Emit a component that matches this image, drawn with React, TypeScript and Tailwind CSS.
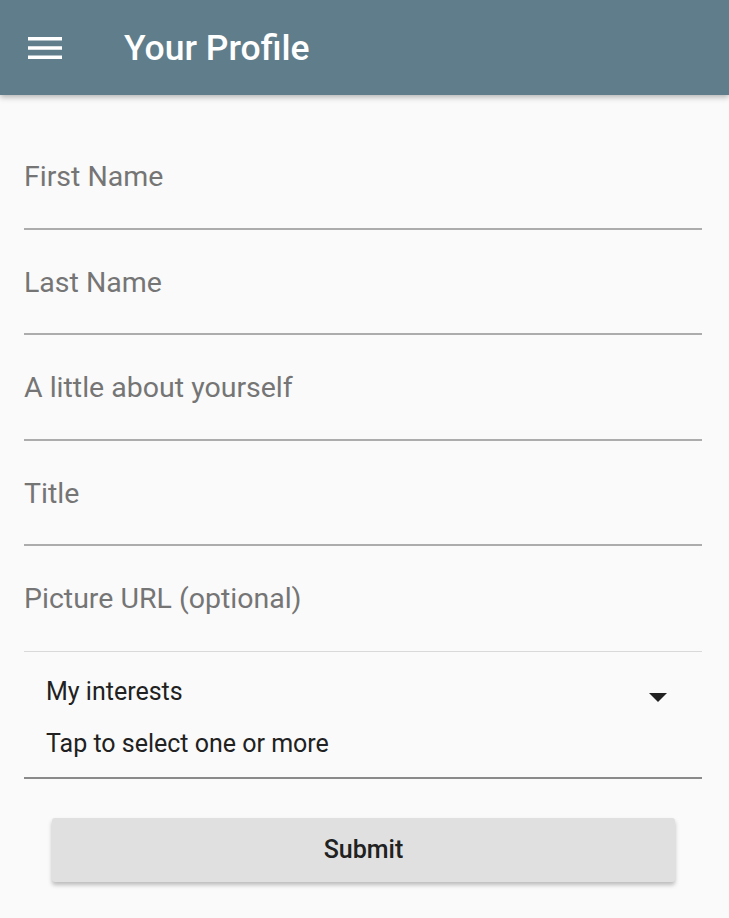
import React from "react";

const fields = ["First Name", "Last Name", "A little about yourself", "Title"];

export default function App() {
  return (
    <div
      className="min-h-[918px] w-full bg-[#fafafa]"
      style={{ fontFamily: "Roboto, 'Liberation Sans', sans-serif" }}
    >
      <header className="relative z-10 flex h-[95px] items-center bg-[#607d8b] shadow-[0_2px_6px_rgba(0,0,0,0.3)]">
        <svg className="ml-[28px] h-[22px] w-[34px]" viewBox="0 0 34 22">
          <rect x="0" y="0" width="34" height="3.5" fill="#fff" />
          <rect x="0" y="9.25" width="34" height="3.5" fill="#fff" />
          <rect x="0" y="18.5" width="34" height="3.5" fill="#fff" />
        </svg>
        <h1 className="ml-[62px] text-[35.5px] font-medium leading-[40px] text-white">Your Profile</h1>
      </header>

      <main className="pl-[24px] pr-[27px] pt-[29px]">
        {fields.map((label) => (
          <div key={label} className="h-[105.5px] border-b-2 border-[#acacac] pt-[36px]">
            <span className="text-[28.5px] leading-[33px] text-[#757575]">{label}</span>
          </div>
        ))}
        <div className="h-[105px] pt-[36px]">
          <span className="text-[28.5px] leading-[33px] text-[#757575]">Picture URL (optional)</span>
        </div>

        <div className="border-t border-b-2 border-t-[#d9d9d9] border-b-[#8a8a8a]">
          <div className="flex items-center justify-between pl-[22px] pr-[35px] pt-[25px]">
            <span className="text-[25px] leading-[29px] text-[#212121]">My interests</span>
            <svg className="mt-[12px] h-[9px] w-[18px]" viewBox="0 0 18 9">
              <polygon points="0,0 18,0 9,9" fill="#212121" />
            </svg>
          </div>
          <div className="pb-[18px] pl-[22px] pt-[23px]">
            <span className="text-[25px] leading-[29px] text-[#212121]">Tap to select one or more</span>
          </div>
        </div>

        <div className="pl-[28px] pr-[27px] pt-[39px]">
          <button
            type="button"
            className="flex h-[64px] w-full items-center justify-center rounded-[3px] bg-[#e0e0e0] text-[25px] font-medium text-[#212121] shadow-[0_3px_4px_rgba(0,0,0,0.25)]"
          >
            Submit
          </button>
        </div>
      </main>
    </div>
  );
}
